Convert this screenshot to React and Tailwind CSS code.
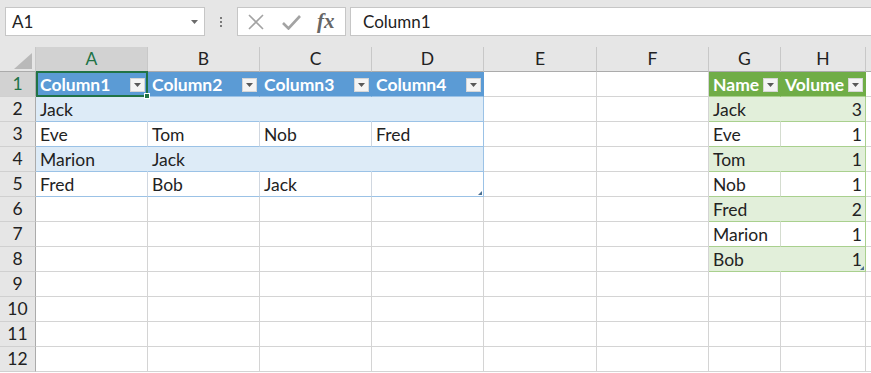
import React from "react";

const COLS = [
  { name: "A", w: "w-[112px]" },
  { name: "B", w: "w-[112px]" },
  { name: "C", w: "w-[112px]" },
  { name: "D", w: "w-[112px]" },
  { name: "E", w: "w-[113px]" },
  { name: "F", w: "w-[112px]" },
  { name: "G", w: "w-[72px]" },
  { name: "H", w: "w-[85px]" },
];

// every cell style written out in full
const KIND = {
  p: "bg-white border-r border-b border-r-[#d4d4d4] border-b-[#d4d4d4] text-[#222]",
  bh: "bg-[#5b9bd5] border-r border-b border-r-[#5b9bd5] border-b-[#9bc2e6] text-white font-bold",
  bhE: "bg-[#5b9bd5] border-r border-b border-r-[#5b9bd5] border-b-[#9bc2e6] text-white font-bold",
  bb: "bg-[#ddebf7] border-r border-b border-r-[#ddebf7] border-b-[#9bc2e6] text-[#222]",
  bbE: "bg-[#ddebf7] border-r border-b border-r-[#9bc2e6] border-b-[#9bc2e6] text-[#222]",
  bw: "bg-white border-r border-b border-r-[#d0d7e0] border-b-[#9bc2e6] text-[#222]",
  bwE: "bg-white border-r border-b border-r-[#9bc2e6] border-b-[#9bc2e6] text-[#222]",
  gh: "bg-[#70ad47] border-r border-b border-r-[#70ad47] border-b-[#a9d08e] text-white font-bold",
  ghE: "bg-[#70ad47] border-r border-b border-r-[#70ad47] border-b-[#a9d08e] text-white font-bold",
  gb: "bg-[#e2efda] border-r border-b border-r-[#e2efda] border-b-[#a9d08e] text-[#222]",
  gbE: "bg-[#e2efda] border-r border-b border-r-[#a9d08e] border-b-[#a9d08e] text-[#222]",
  gw: "bg-white border-r border-b border-r-[#d4dccf] border-b-[#a9d08e] text-[#222]",
  gwE: "bg-white border-r border-b border-r-[#a9d08e] border-b-[#a9d08e] text-[#222]",
};

const P6 = ["p", "p", "p", "p", "p", "p"];
const PLAIN = ["p", "p", "p", "p", "p", "p", "p", "p"];

const KINDS = [
  ["bh", "bh", "bh", "bhE", "p", "p", "gh", "ghE"],
  ["bb", "bb", "bb", "bbE", "p", "p", "gb", "gbE"],
  ["bw", "bw", "bw", "bwE", "p", "p", "gw", "gwE"],
  ["bb", "bb", "bb", "bbE", "p", "p", "gb", "gbE"],
  ["bw", "bw", "bw", "bwE", "p", "p", "gw", "gwE"],
  [...P6, "gb", "gbE"],
  [...P6, "gw", "gwE"],
  [...P6, "gb", "gbE"],
  PLAIN,
  PLAIN,
  PLAIN,
  PLAIN,
];

const VALUES = [
  ["Column1", "Column2", "Column3", "Column4", "", "", "Name", "Volume"],
  ["Jack", "", "", "", "", "", "Jack", "3"],
  ["Eve", "Tom", "Nob", "Fred", "", "", "Eve", "1"],
  ["Marion", "Jack", "", "", "", "", "Tom", "1"],
  ["Fred", "Bob", "Jack", "", "", "", "Nob", "1"],
  ["", "", "", "", "", "", "Fred", "2"],
  ["", "", "", "", "", "", "Marion", "1"],
  ["", "", "", "", "", "", "Bob", "1"],
];

function FilterButton() {
  return (
    <div className="w-[15px] h-[14px] mr-[2px] mt-[2px] shrink-0 bg-[#f4f4f4] border border-[#d6d6d6] flex items-center justify-center">
      <svg width="7" height="4" viewBox="0 0 7 4">
        <polygon points="0,0 7,0 3.5,4" fill="#595959" />
      </svg>
    </div>
  );
}

function ResizeHandle() {
  return (
    <svg className="absolute right-[1px] bottom-[1px]" width="4" height="4" viewBox="0 0 4 4">
      <polygon points="4,0 4,4 0,4" fill="#4a6f91" />
    </svg>
  );
}

function Cell({ kind, value, col, row }) {
  const header = row === 0 && kind !== "p";
  const numeric = col === 7 && row > 0 && value !== "";
  const selected = row === 0 && col === 0;
  const handle = (row === 4 && col === 3) || (row === 7 && col === 7);
  return (
    <div
      className={`${COLS[col].w} h-[25px] shrink-0 relative flex items-center ${KIND[kind]} ${
        numeric ? "justify-end pr-[3px]" : "justify-between pl-[4px]"
      }`}
    >
      <span className="leading-[24px] pt-[1px] whitespace-nowrap">{value}</span>
      {header && <FilterButton />}
      {handle && <ResizeHandle />}
      {selected && (
        <div className="absolute -top-[1px] left-0 -right-[1px] -bottom-[1px] border-2 border-[#217346] pointer-events-none z-10">
          <div className="absolute -right-[4px] -bottom-[4px] w-[6px] h-[6px] bg-[#217346] border border-white" />
        </div>
      )}
    </div>
  );
}

function Toolbar() {
  return (
    <div className="h-[47px] bg-[#e6e6e6] flex items-start pt-[7px] pl-[5px]">
      {/* Name box */}
      <div className="w-[200px] h-[29px] bg-white border border-[#c6c6c6] flex items-center justify-between pl-[6px] pr-[6px]">
        <span className="text-[17px] text-[#222]">A1</span>
        <svg width="7" height="4" viewBox="0 0 7 4">
          <polygon points="0,0 7,0 3.5,4" fill="#6b6b6b" />
        </svg>
      </div>
      {/* separator dots */}
      <div className="w-[32px] h-[29px] flex flex-col items-center justify-center gap-[2px]">
        <div className="w-[2px] h-[2px] bg-[#7a7a7a]" />
        <div className="w-[2px] h-[2px] bg-[#7a7a7a]" />
        <div className="w-[2px] h-[2px] bg-[#7a7a7a]" />
      </div>
      {/* cancel / enter / fx */}
      <div className="w-[109px] h-[29px] bg-white border border-[#c6c6c6] flex items-center pl-[9px]">
        <svg width="18" height="16" viewBox="0 0 18 16">
          <path d="M2 1 L16 15 M16 1 L2 15" stroke="#a3a3a3" strokeWidth="1.6" fill="none" />
        </svg>
        <svg className="ml-[17px]" width="19" height="16" viewBox="0 0 19 16">
          <path d="M1 9 L6.5 14.5 L18 2" stroke="#a3a3a3" strokeWidth="2.6" fill="none" />
        </svg>
        <span className="ml-[16px] text-[21px] leading-none italic font-bold text-[#666] font-['Liberation_Serif',serif]">
          fx
        </span>
      </div>
      {/* formula input */}
      <div className="flex-1 ml-[4px] h-[29px] bg-white border-y border-l border-[#c6c6c6] flex items-center pl-[12px]">
        <span className="text-[17px] text-[#222]">Column1</span>
      </div>
    </div>
  );
}

export default function App() {
  return (
    <div className="w-[871px] h-[373px] overflow-hidden bg-white font-['Lato','Liberation_Sans',sans-serif] text-[17.5px]">
      <Toolbar />

      {/* column headers */}
      <div className="flex h-[25px] bg-[#e6e6e6]">
        <div className="w-[36px] h-[25px] shrink-0 border-r border-b border-r-[#c8c8c8] border-b-[#ababab] flex items-end justify-end pr-[3px] pb-[2px]">
          <svg width="18" height="16" viewBox="0 0 18 16">
            <polygon points="18,0 18,16 0,16" fill="#b9b9b9" />
          </svg>
        </div>
        {COLS.map((c, i) => (
          <div
            key={c.name}
            className={`${c.w} h-[25px] shrink-0 flex items-center justify-center border-r border-b ${
              i === 0
                ? "bg-[#d2d2d2] text-[#217346] border-r-[#c8c8c8] border-b-[#ababab]"
                : "text-[#222] border-r-[#c8c8c8] border-b-[#ababab]"
            }`}
          >
            {c.name}
          </div>
        ))}
        <div className="flex-1 border-b border-b-[#ababab]" />
      </div>

      {/* rows */}
      {KINDS.map((kinds, r) => (
        <div key={r} className="flex h-[25px]">
          <div
            className={`w-[36px] h-[25px] shrink-0 flex items-center justify-center border-r border-b border-r-[#ababab] border-b-[#d0d0d0] ${
              r === 0 ? "bg-[#d2d2d2] text-[#217346]" : "bg-[#e6e6e6] text-[#222]"
            }`}
          >
            {r + 1}
          </div>
          {kinds.map((k, c) => (
            <Cell key={c} kind={k} value={(VALUES[r] || [])[c] || ""} col={c} row={r} />
          ))}
          <div className="flex-1 border-b border-b-[#d4d4d4]" />
        </div>
      ))}
    </div>
  );
}
